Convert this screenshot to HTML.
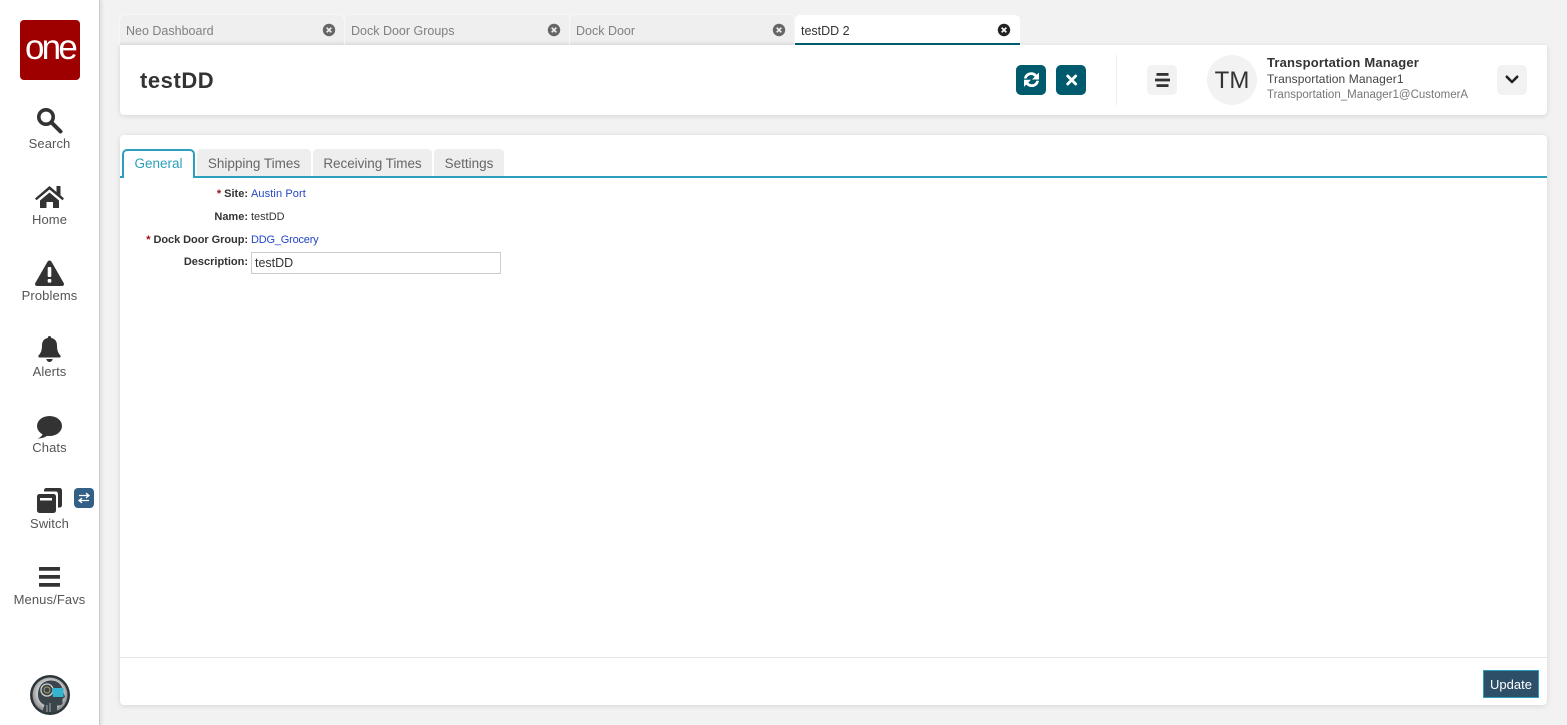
<!DOCTYPE html>
<html lang="en">
<head>
<meta charset="utf-8">
<title>testDD</title>
<style>
html,body{margin:0;padding:0;width:1567px;height:725px;overflow:hidden;background:#f2f2f2;font-family:"Liberation Sans",sans-serif;color:#333}
div,span,a,svg{position:absolute;white-space:nowrap}
a{text-decoration:none}
.side{left:0;top:0;width:99px;height:725px;background:#fff;border-right:1px solid #c9c9c9;box-shadow:2px 0 4px rgba(0,0,0,.08)}
.logo{left:20px;top:20px;width:60px;height:60px;border-radius:4px;background:#9e0000;color:#fff;font-size:35px;line-height:56px;text-align:center;letter-spacing:-2.8px}
.nl{left:0;width:99px;text-align:center;font-size:13px;line-height:16px;color:#555;letter-spacing:.1px}
.tab{top:15px;height:30px;background:#efefef;border-radius:5px 5px 0 0;box-shadow:inset 0 -5px 5px -4px rgba(0,0,0,.08),0 0 0 1px #f7f7f7}
.tab span{left:6px;top:8px;font-size:12.5px;line-height:16px;color:#808080;letter-spacing:0}
.tab svg{left:202px;top:8px}
.card{background:#fff;box-shadow:0 1px 6px rgba(0,0,0,.12)}
.btn{top:65px;width:30px;height:30px;border-radius:5px;background:#005a6e}
.gbtn{top:65px;width:30px;height:30px;border-radius:5px;background:#f2f2f2}
.st{top:149px;height:27px;background:#eee;border-radius:4px 4px 0 0;font-size:13.5px;line-height:29px;text-align:center;color:#666}
.lb{left:120px;width:128px;text-align:right;font-size:11px;line-height:14px;font-weight:bold;color:#333}
.lb i{font-style:normal;color:#a01010}
.val{left:251px;font-size:11px;line-height:14px;color:#333}
.val.l{color:#2347c5}
</style>
</head>
<body>
<div class="side"></div>
<div class="logo">one</div>

<svg style="left:35px;top:106px" width="30" height="30" viewBox="35 106 30 30"><circle cx="46" cy="117" r="7.200" fill="none" stroke="#333" stroke-width="3.600"/><path d="M52 123L60.500 131.500" stroke="#333" stroke-width="4" stroke-linecap="round"/></svg>
<div class="nl" style="top:136px">Search</div>

<svg style="left:34px;top:184px" width="32" height="26" viewBox="34 184 32 26"><path d="M35 198.500L49.500 186L56.500 192V186H60.500V195.300L64 198.500L62.500 200.300L49.500 189.500L36.500 200.300Z" fill="#333"/><path d="M40 200.500L49.500 192.500L59 200.500V208H53V202H46.500V208H40Z" fill="#333"/></svg>
<div class="nl" style="top:212px">Home</div>

<svg style="left:34px;top:259px" width="32" height="28" viewBox="34 259 32 28"><path d="M49.500 260.500C50.500 260.500 51 261 51.500 261.800L63.700 283C64.500 284.500 63.500 286 62 286H37C35.500 286 34.500 284.500 35.300 283L47.500 261.800C48 261 48.500 260.500 49.500 260.500Z" fill="#333"/><rect x="47.700" y="267" width="3.600" height="10" rx="1" fill="#fff"/><rect x="47.700" y="279" width="3.600" height="3.600" rx="1" fill="#fff"/></svg>
<div class="nl" style="top:288px">Problems</div>

<svg style="left:37px;top:335px" width="25" height="28" viewBox="37 335 25 28"><path d="M49.500 336C50.600 336 51.200 336.800 51.200 338C55.500 338.800 57 341.800 57 345.500C57 351 58.500 353.500 60.500 355.500C60.900 356.500 60.500 357.500 59.500 357.500H39.500C38.500 357.500 38.100 356.500 38.500 355.500C40.500 353.500 42 351 42 345.500C42 341.800 43.500 338.800 47.800 338C47.800 336.800 48.400 336 49.500 336Z" fill="#333"/><path d="M46.300 359H52.700C52.300 360.800 51 362 49.500 362C48 362 46.700 360.800 46.300 359Z" fill="#333"/></svg>
<div class="nl" style="top:364px">Alerts</div>

<svg style="left:35px;top:414px" width="30" height="26" viewBox="35 414 30 26"><ellipse cx="49.500" cy="426" rx="12.500" ry="10" fill="#333"/><path d="M43 433C42.500 435.500 40.500 437.500 37.500 438.500C41.500 438.500 45 437.500 48 435Z" fill="#333"/></svg>
<div class="nl" style="top:440px">Chats</div>

<svg style="left:36px;top:487px" width="28" height="28" viewBox="36 487 28 28"><path d="M46.500 488H59.500C61 488 62 489 62 490.500V505C62 506.500 61 507.500 59.500 507.500H58V494C58 492.500 57 491.500 55.500 491.500H44V490.500C44 489 45 488 46.500 488Z" fill="#333"/><rect x="37" y="494" width="19" height="19" rx="2.500" fill="#333"/><rect x="40" y="498" width="12" height="2.500" fill="#fff"/></svg>
<div style="left:74px;top:488px;width:20px;height:20px;border-radius:4px;background:#336086"></div>
<svg style="left:74px;top:488px" width="20" height="20" viewBox="0 0 20 20"><path d="M5 7.500H14M12 5.200L15 7.500L12 9.800M15 12.500H6M8 10.200L5 12.500L8 14.800" fill="none" stroke="#fff" stroke-width="1.300"/></svg>
<div class="nl" style="top:516px">Switch</div>

<svg style="left:38px;top:566px" width="23" height="22" viewBox="38 566 23 22"><rect x="39" y="567" width="21" height="3.800" rx=".6" fill="#333"/><rect x="39" y="575" width="21" height="3.800" rx=".6" fill="#333"/><rect x="39" y="583" width="21" height="3.800" rx=".6" fill="#333"/></svg>
<div class="nl" style="top:592px">Menus/Favs</div>

<svg style="left:29px;top:674px" width="42" height="42" viewBox="0 0 42 42">
<defs><radialGradient id="g" cx="50%" cy="45%" r="55%"><stop offset="0" stop-color="#f0f0f0"/><stop offset=".7" stop-color="#c4c4c4"/><stop offset="1" stop-color="#808080"/></radialGradient></defs>
<circle cx="21" cy="21" r="20" fill="#2c3539"/><circle cx="21" cy="21" r="17.500" fill="url(#g)"/>
<path d="M9 21C9 11 15 6.500 22 6.500C29 6.500 33 11 34 17L36 23L33.500 25V29C33.500 31 31 31.500 28 31.500V38.500H13L15.500 31C11.500 29 9 25.500 9 21Z" fill="#39454b"/>
<circle cx="18" cy="16" r="6" fill="none" stroke="#cfcfcf" stroke-width="1.300"/><circle cx="18" cy="16" r="3" fill="none" stroke="#b59a5a" stroke-width="1"/>
<path d="M23 14H34.500V23H24Z" fill="#35b4cf"/><path d="M18 31V38M21 29V38" stroke="#aaa" stroke-width="1"/>
</svg>

<div class="tab" style="left:120px;width:224px"><span>Neo Dashboard</span><svg width="14" height="14" viewBox="0 0 14 14" style="left:202px"><circle cx="7" cy="7" r="6.200" fill="#666"/><path d="M4.700 4.700L9.300 9.300M9.300 4.700L4.700 9.300" stroke="#efefef" stroke-width="1.700"/></svg></div>
<div class="tab" style="left:345px;width:225px"><span>Dock Door Groups</span><svg width="14" height="14" viewBox="0 0 14 14"><circle cx="7" cy="7" r="6.200" fill="#666"/><path d="M4.700 4.700L9.300 9.300M9.300 4.700L4.700 9.300" stroke="#efefef" stroke-width="1.700"/></svg></div>
<div class="tab" style="left:570px;width:224px"><span>Dock Door</span><svg width="14" height="14" viewBox="0 0 14 14"><circle cx="7" cy="7" r="6.200" fill="#666"/><path d="M4.700 4.700L9.300 9.300M9.300 4.700L4.700 9.300" stroke="#efefef" stroke-width="1.700"/></svg></div>

<div class="card" style="left:120px;top:45px;width:1427px;height:70px;border-radius:0 0 4px 4px"></div>

<div class="tab" style="left:795px;width:225px;height:28px;background:#fff;border-bottom:2px solid #005a6e;box-shadow:none"><span style="color:#333">testDD 2</span><svg width="14" height="14" viewBox="0 0 14 14"><circle cx="7" cy="7" r="6.200" fill="#222"/><path d="M4.700 4.700L9.300 9.300M9.300 4.700L4.700 9.300" stroke="#fff" stroke-width="1.700"/></svg></div>

<div style="left:140px;top:67px;font-size:22px;line-height:28px;font-weight:bold;color:#333;letter-spacing:.55px">testDD</div>

<div class="btn" style="left:1016px"></div>
<svg style="left:1016px;top:65px" width="30" height="30" viewBox="0 0 30 30"><path d="M8 13.500C8.500 9.800 11.500 7.300 15.300 7.300C17.500 7.300 19.400 8.200 20.800 9.700L23 7.500V14.500H16L18.700 11.800C17.800 10.800 16.600 10 15.300 10C13 10 11.200 11.500 10.700 13.500Z" fill="#fff"/><path d="M23 15.700C22.500 19.600 19.500 22 15.700 22C13.500 22 11.600 21.100 10.200 19.600L8 21.800V14.800H15L12.300 17.500C13.200 18.500 14.400 19.300 15.700 19.300C18 19.300 19.800 17.800 20.300 15.700Z" fill="#fff"/></svg>
<div class="btn" style="left:1056px"></div>
<svg style="left:1056px;top:65px" width="30" height="30" viewBox="0 0 30 30"><path d="M11.700 11L19.700 19M19.700 11L11.700 19" stroke="#fff" stroke-width="2.800" stroke-linecap="round"/></svg>

<div style="left:1116px;top:55px;width:1px;height:50px;background:#eee"></div>

<div class="gbtn" style="left:1147px"></div>
<svg style="left:1147px;top:65px" width="30" height="30" viewBox="0 0 30 30"><rect x="9.500" y="8" width="12" height="2.800" fill="#333"/><rect x="8" y="13.600" width="15" height="2.800" fill="#333"/><rect x="9.500" y="19.200" width="12" height="2.800" fill="#333"/></svg>

<div style="left:1207px;top:55px;width:50px;height:50px;border-radius:50%;background:#f2f2f2;font-size:24px;line-height:52px;text-align:center;color:#333">TM</div>
<div style="left:1267px;top:55px;font-size:13px;line-height:16px;font-weight:bold;color:#333;letter-spacing:.18px">Transportation Manager</div>
<div style="left:1267px;top:72px;font-size:12px;line-height:15px;color:#444;letter-spacing:.1px">Transportation Manager1</div>
<div style="left:1267px;top:88px;font-size:11.500px;line-height:15px;color:#777">Transportation_Manager1@CustomerA</div>

<div class="gbtn" style="left:1497px"></div>
<svg style="left:1497px;top:65px" width="30" height="30" viewBox="0 0 30 30"><path d="M9.800 11.800L15 17L20.200 11.800" fill="none" stroke="#222" stroke-width="2.600" stroke-linecap="round" stroke-linejoin="round"/></svg>

<div class="card" style="left:120px;top:135px;width:1427px;height:570px;border-radius:4px"></div>
<div style="left:120px;top:176px;width:1427px;height:2px;background:#2b9fbd"></div>
<div style="left:122px;top:149px;width:69px;height:27px;background:#fff;border:2px solid #2b9fbd;border-bottom:none;border-radius:5px 5px 0 0;font-size:13.500px;line-height:25px;text-align:center;color:#2b9fbd">General</div>
<div class="st" style="left:197px;width:114px">Shipping Times</div>
<div class="st" style="left:313px;width:119px;letter-spacing:-.05px">Receiving Times</div>
<div class="st" style="left:434px;width:70px">Settings</div>

<div class="lb" style="top:187px"><i>*</i> Site:</div><a class="val l" style="top:187px;letter-spacing:.1px">Austin Port</a>
<div class="lb" style="top:210px">Name:</div><div class="val" style="top:210px">testDD</div>
<div class="lb" style="top:233px;letter-spacing:-.05px"><i>*</i> Dock Door Group:</div><a class="val l" style="top:233px;letter-spacing:-.2px">DDG_Grocery</a>
<div class="lb" style="top:255px">Description:</div>
<div style="left:251px;top:252px;width:245px;height:20px;border:1px solid #ccc;padding-left:3px;font-size:12.500px;line-height:21px;color:#333">testDD</div>

<div style="left:120px;top:657px;width:1427px;height:1px;background:#e3e3e3"></div>
<div style="left:1483px;top:670px;width:54px;height:26px;border:1px solid #2b9fbd;background:#2d4f68;color:#fff;font-size:13px;line-height:28px;text-align:center">Update</div>
</body>
</html>
